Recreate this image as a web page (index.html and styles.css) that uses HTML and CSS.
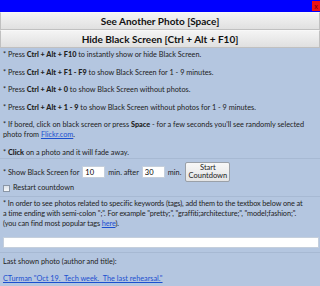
FILE: index.html
```html
<!DOCTYPE html>
<html lang="en">
<head>
    <meta charset="UTF-8">
    <meta name="viewport" content="width=device-width, initial-scale=1.0">
    <title>Black Screen</title>
    <link rel="stylesheet" href="styles.css">
</head>
<body>
    <div class="title-bar">
        <span class="close-btn">x</span>
    </div>
    <button class="big-btn">See Another Photo [Space]</button>
    <button class="big-btn">Hide Black Screen [Ctrl + Alt + F10]</button>
    <div class="panel help">
        <p>* Press <b>Ctrl + Alt + F10</b> to instantly show or hide Black Screen.</p>
        <p>* Press <b>Ctrl + Alt + F1 - F9</b> to show Black Screen for 1 - 9 minutes.</p>
        <p>* Press <b>Ctrl + Alt + 0</b> to show Black Screen without photos.</p>
        <p>* Press <b>Ctrl + Alt + 1 - 9</b> to show Black Screen without photos for 1 - 9 minutes.</p>
        <p>* If bored, click on black screen or press <b>Space</b> - for a few seconds you'll see randomly selected photo from <a href="#">Flickr.com</a>.</p>
        <p>* <b>Click</b> on a photo and it will fade away.</p>
    </div>
    <div class="panel timer">
        <div class="timer-row">
            <span>* Show Black Screen for</span>
            <input class="num" type="text" value="10">
            <span>min. after</span>
            <input class="num" type="text" value="30">
            <span>min.</span>
            <button class="start-btn">Start<br>Countdown</button>
        </div>
        <div class="restart"><span class="check"></span>Restart countdown</div>
    </div>
    <div class="panel tags">
        <p>* In order to see photos related to specific keywords (tags), add them to the textbox below one at<br>a time ending with semi-colon ";". For example "pretty;", "graffiti;architecture;", "model;fashion;".<br>(you can find most popular tags <a href="#">here</a>).</p>
        <input class="tag-box" type="text">
    </div>
    <div class="panel last">
        <p>Last shown photo (author and title):</p>
        <p><a href="#">CTurman "Oct 19.&nbsp; Tech week.&nbsp; The last rehearsal."</a></p>
    </div>
</body>
</html>
```

FILE: styles.css
```css
body {
    margin: 0;
    width: 320px;
    height: 286px;
    overflow: hidden;
    background-color: #b4c6e0;
    font-family: Lato, sans-serif;
    font-size: 7.3px;
    color: #222;
}
.title-bar {
    height: 12px;
    background-color: #0000ff;
    display: flex;
    justify-content: flex-end;
    align-items: center;
}
.close-btn {
    width: 8px;
    height: 10px;
    background-color: #ee1111;
    color: #600;
    font-size: 7px;
    line-height: 10px;
    text-align: center;
}
.big-btn {
    display: block;
    width: 100%;
    height: 18px;
    margin: 0;
    padding: 0;
    border: 1px solid #c0c0c0;
    border-top-color: #f8f8f8;
    background: linear-gradient(#f4f4f4, #e0e0e0);
    font-family: Lato, sans-serif;
    font-weight: bold;
    font-size: 10px;
    color: #111;
}
.panel {
    padding: 2px 4px 0 3px;
    border-bottom: 1px solid #a7b9d3;
}
.panel p {
    margin: 0 0 7.5px 0;
    line-height: 10px;
}
.panel p:last-child {
    margin-bottom: 0;
}
.help {
    padding-bottom: 0.5px;
}
b {
    font-weight: 900;
}
a {
    color: #1b4fd0;
}
.timer {
    padding-top: 3px;
    padding-bottom: 3px;
}
.timer-row {
    display: flex;
    align-items: center;
    gap: 3px;
}
.num {
    width: 17px;
    height: 10px;
    padding: 0 2px;
    border: 1px solid #c5cfdc;
    font-size: 7.5px;
    font-family: inherit;
}
.start-btn {
    width: 45px;
    height: 20px;
    margin-left: 1px;
    padding: 0;
    border: 1px solid #9aa0a8;
    border-radius: 2px;
    background: linear-gradient(#f7f7f7, #e4e4e4);
    font-family: inherit;
    font-size: 7.5px;
    line-height: 8px;
    color: #222;
}
.restart {
    display: flex;
    align-items: center;
    gap: 3px;
    height: 10px;
    margin-top: 1px;
    line-height: 10px;
}
.check {
    width: 5px;
    height: 5px;
    border: 1px solid #8a96a6;
    background: linear-gradient(#dde3ea, #f6f8fa);
}
.tags {
    padding-top: 2px;
    padding-bottom: 4px;
    padding-right: 1px;
}
.tags p {
    line-height: 10px;
    letter-spacing: -0.1px;
    white-space: nowrap;
}
.tag-box {
    display: block;
    width: 100%;
    box-sizing: border-box;
    height: 11px;
    margin-top: 2px;
    border: 1px solid #c5cfdc;
}
.last {
    padding-top: 4px;
    border-bottom: none;
}
.last p {
    margin-bottom: 7px;
}
```
